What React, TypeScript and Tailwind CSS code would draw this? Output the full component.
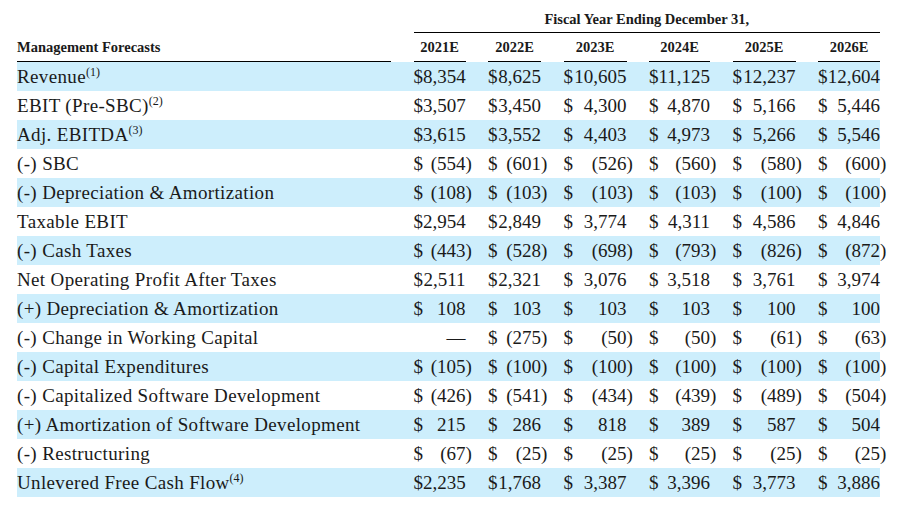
type Row = {
  label: string;
  note?: string;
  values: (string | null)[];
};

const years = ["2021E", "2022E", "2023E", "2024E", "2025E", "2026E"];

const rows: Row[] = [
  { label: "Revenue", note: "(1)", values: ["8,354", "8,625", "10,605", "11,125", "12,237", "12,604"] },
  { label: "EBIT (Pre-SBC)", note: "(2)", values: ["3,507", "3,450", "4,300", "4,870", "5,166", "5,446"] },
  { label: "Adj. EBITDA", note: "(3)", values: ["3,615", "3,552", "4,403", "4,973", "5,266", "5,546"] },
  { label: "(-) SBC", values: ["(554)", "(601)", "(526)", "(560)", "(580)", "(600)"] },
  { label: "(-) Depreciation & Amortization", values: ["(108)", "(103)", "(103)", "(103)", "(100)", "(100)"] },
  { label: "Taxable EBIT", values: ["2,954", "2,849", "3,774", "4,311", "4,586", "4,846"] },
  { label: "(-) Cash Taxes", values: ["(443)", "(528)", "(698)", "(793)", "(826)", "(872)"] },
  { label: "Net Operating Profit After Taxes", values: ["2,511", "2,321", "3,076", "3,518", "3,761", "3,974"] },
  { label: "(+) Depreciation & Amortization", values: ["108", "103", "103", "103", "100", "100"] },
  { label: "(-) Change in Working Capital", values: [null, "(275)", "(50)", "(50)", "(61)", "(63)"] },
  { label: "(-) Capital Expenditures", values: ["(105)", "(100)", "(100)", "(100)", "(100)", "(100)"] },
  { label: "(-) Capitalized Software Development", values: ["(426)", "(541)", "(434)", "(439)", "(489)", "(504)"] },
  { label: "(+) Amortization of Software Development", values: ["215", "286", "818", "389", "587", "504"] },
  { label: "(-) Restructuring", values: ["(67)", "(25)", "(25)", "(25)", "(25)", "(25)"] },
  { label: "Unlevered Free Cash Flow", note: "(4)", values: ["2,235", "1,768", "3,387", "3,396", "3,773", "3,886"] },
];

const grid =
  "grid grid-cols-[374px_52px_53px_63px_61px_63px_62px] gap-x-[22.5px]";

function Amount({ value }: { value: string | null }) {
  if (value === null) {
    return <div className="flex justify-end">—</div>;
  }
  const neg = value.startsWith("(");
  return (
    <div className="flex justify-between">
      <span>$</span>
      {neg ? (
        <span className="relative">
          {value.slice(0, -1)}
          <span className="absolute left-full">)</span>
        </span>
      ) : (
        <span>{value}</span>
      )}
    </div>
  );
}

export default function App() {
  return (
    <div className="h-[514px] w-[900px] bg-white pl-[17px] pt-[9px] font-[family-name:'Liberation_Serif','Times_New_Roman',serif] text-[#1a1a1a]">
      <div className={grid}>
        <div />
        <div className="col-span-6 border-b-[1.5px] border-black pb-[3px] text-center text-[14.5px] font-bold leading-[20px]">
          Fiscal Year Ending December 31,
        </div>
      </div>
      <div className={`${grid} mt-[3px]`}>
        <div className="border-b-[1.5px] border-black pb-[3px] text-[14.5px] font-bold leading-[22px]">
          Management Forecasts
        </div>
        {years.map((y) => (
          <div
            key={y}
            className="border-b-[1.5px] border-black pb-[3px] text-center text-[14.5px] font-bold leading-[22px]"
          >
            {y}
          </div>
        ))}
      </div>
      <div className="w-[863px]">
        {rows.map((r, i) => (
          <div
            key={r.label}
            className={`${grid} h-[29px] items-center text-[19px] leading-[29px] ${
              i % 2 === 0 ? "bg-[#cdeefc]" : "bg-white"
            }`}
          >
            <div className="whitespace-nowrap tracking-[0.35px]">
              {r.label}
              {r.note && (
                <sup className="relative -top-[7px] text-[12px] leading-none tracking-normal">
                  {r.note}
                </sup>
              )}
            </div>
            {r.values.map((v, j) => (
              <Amount key={j} value={v} />
            ))}
          </div>
        ))}
      </div>
    </div>
  );
}
